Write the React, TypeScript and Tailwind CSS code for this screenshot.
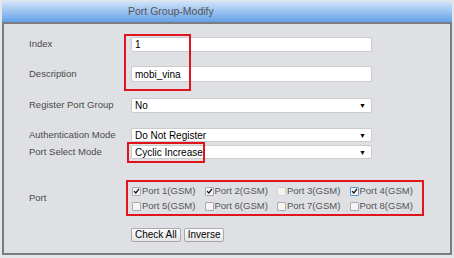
import { useState } from 'react';

const ports = [
  { name: 'Port 1(GSM)', checked: true },
  { name: 'Port 2(GSM)', checked: true },
  { name: 'Port 3(GSM)', checked: false, disabled: true },
  { name: 'Port 4(GSM)', checked: true, focus: true },
  { name: 'Port 5(GSM)', checked: false },
  { name: 'Port 6(GSM)', checked: false },
  { name: 'Port 7(GSM)', checked: false },
  { name: 'Port 8(GSM)', checked: false },
];

function Select({ value }: { value: string }) {
  return (
    <div className="w-[241px] h-full bg-white border border-[#c9cbce] rounded-[2px] flex items-center justify-between pl-[3px] pr-[5px] text-[10px] text-black">
      <span>{value}</span>
      <span className="text-[7px] leading-none">▼</span>
    </div>
  );
}

function Box({ checked, disabled, focus }: { checked: boolean; disabled?: boolean; focus?: boolean }) {
  return (
    <span
      className={
        'w-[9px] h-[9px] rounded-[1px] border flex items-center justify-center bg-[#f4f4f4] ' +
        (focus ? 'border-[#5b8fd6]' : disabled ? 'border-[#d2d3d5]' : 'border-[#a9abae]')
      }
    >
      {checked && (
        <svg viewBox="0 0 10 10" className="w-[8px] h-[8px]">
          <path d="M1.5 5.2 L4 7.8 L8.6 1.8" fill="none" stroke="#111" strokeWidth="1.8" />
        </svg>
      )}
    </span>
  );
}

export default function App() {
  const [items] = useState(ports);

  return (
    <div className="w-[454px] h-[258px] bg-[#e3e5e8] pt-[1px] px-[2px] font-['Liberation_Sans',Arial,sans-serif]">
      {/* Title bar */}
      <div className="h-[21px] bg-gradient-to-b from-[#d3e4f8] to-[#62a1e7] flex items-center pl-[126px] text-[10.5px] text-[#555]">
        Port Group-Modify
      </div>

      {/* Panel */}
      <div className="relative h-[233px] bg-[#dee0e3] border-2 border-[#7a7c7f] pl-[25px] text-[9.5px] text-[#4a4a4a]">
        <div className="flex items-center h-[15px] mt-[13px]">
          <span className="w-[102px]">Index</span>
          <div className="w-[241px] h-full bg-white border border-[#c9cbce] rounded-[2px] pl-[3px] flex items-center text-[10px] text-black">1</div>
        </div>
        <div className="flex items-center h-[16px] mt-[14px]">
          <span className="w-[102px]">Description</span>
          <div className="w-[241px] h-full bg-white border border-[#c9cbce] rounded-[2px] pl-[3px] flex items-center text-[10px] text-black">mobi_vina</div>
        </div>
        <div className="flex items-center h-[15px] mt-[16px]">
          <span className="w-[102px]">Register Port Group</span>
          <Select value="No" />
        </div>
        <div className="flex items-center h-[14px] mt-[15px]">
          <span className="w-[102px]">Authentication Mode</span>
          <Select value="Do Not Register" />
        </div>
        <div className="flex items-center h-[14px] mt-[3px]">
          <span className="w-[102px]">Port Select Mode</span>
          <Select value="Cyclic Increase" />
        </div>

        <div className="flex items-center mt-[21px]">
          <span className="w-[97px]">Port</span>
          <div className="w-[298px] h-[36px] border-2 border-[#e0141c] pl-[4px] pt-[4px] grid grid-cols-4 gap-y-[3px] text-[#555]">
            {items.map((p) => (
              <label key={p.name} className="flex items-center h-[10px]">
                <Box checked={p.checked} disabled={p.disabled} focus={p.focus} />
                <span className="ml-[1px]">{p.name}</span>
              </label>
            ))}
          </div>
        </div>

        <div className="flex gap-[3px] ml-[102px] mt-[12px]">
          <button className="h-[14px] px-[3px] border border-[#a7a9ac] rounded-[2px] bg-gradient-to-b from-white to-[#e4e4e4] text-[10px] text-black leading-none">Check All</button>
          <button className="h-[14px] px-[3px] border border-[#a7a9ac] rounded-[2px] bg-gradient-to-b from-white to-[#e4e4e4] text-[10px] text-black leading-none">Inverse</button>
        </div>

        {/* annotation boxes */}
        <div className="absolute left-[120px] top-[10px] w-[67px] h-[57px] border-2 border-[#e0141c]" />
        <div className="absolute left-[123px] top-[118px] w-[78px] h-[21px] border-2 border-[#e0141c]" />
      </div>
    </div>
  );
}
